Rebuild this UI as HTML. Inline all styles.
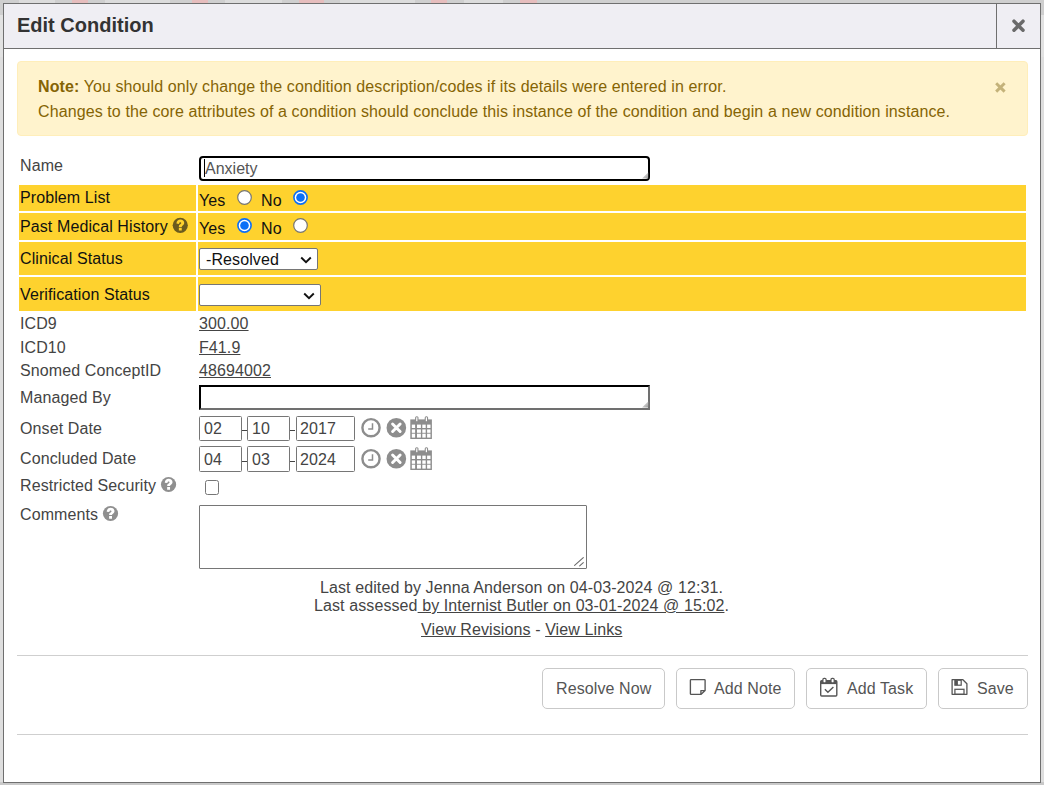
<!DOCTYPE html>
<html><head><meta charset="utf-8">
<style>
html,body{margin:0;padding:0;width:1044px;height:785px;overflow:hidden;background:#dedede;font-family:"Liberation Sans",sans-serif;}
.a{position:absolute;}
.t{position:absolute;font-size:16px;line-height:18px;white-space:nowrap;color:#444;letter-spacing:0.1px;}
#bgtop{left:0;top:0;width:1044px;height:15px;background:#cfcfcf;}
#bgtop2{left:0;top:15px;width:1044px;height:42px;background:#e2e2e2;}
#bgbot{left:0;top:782px;width:1044px;height:3px;background:#c9c9c9;}
#dlg{left:3px;top:3px;width:1036px;height:778px;border:1px solid #6f6f6f;background:#fff;}
#hdr{left:0;top:0;width:1036px;height:44px;background:#efeef3;border-bottom:1px solid #6f6f6f;}
#title{left:14px;top:12px;font-size:20px;font-weight:bold;color:#333;line-height:22px;letter-spacing:0;}
#closesep{left:992px;top:0;width:1px;height:44px;background:#6f6f6f;}
#alert{left:17px;top:61px;width:1009px;height:73px;background:#fff3cd;border:1px solid #ffeeba;border-radius:4px;}
.yrow{position:absolute;background:#fed22e;}
.lnk{text-decoration:underline;}
.btn{position:absolute;top:668px;height:39px;border:1px solid #c9c9c9;border-radius:5px;background:#fff;}
.bt{position:absolute;font-size:16px;line-height:18px;color:#555;white-space:nowrap;letter-spacing:0.1px;}
.hr{position:absolute;left:17px;width:1011px;height:1px;background:#cfcfcf;}
</style></head><body>
<div class="a" id="bgtop"></div>
<div class="a" id="bgtop2"></div>
<div class="a" id="bgbot"></div>
<div class="a" style="left:19px;top:0;width:36px;height:3px;background:#e4e4e4;opacity:0.6"></div>
<div class="a" style="left:105px;top:0;width:65px;height:3px;background:#e4e4e4;opacity:0.6"></div>
<div class="a" style="left:225px;top:0;width:57px;height:3px;background:#e4e4e4;opacity:0.6"></div>
<div class="a" style="left:340px;top:0;width:75px;height:3px;background:#e4e4e4;opacity:0.6"></div>
<div class="a" style="left:464px;top:0;width:39px;height:3px;background:#e4e4e4;opacity:0.6"></div>
<div class="a" style="left:72px;top:0;width:16px;height:3px;background:#e6bdbd"></div>
<div class="a" style="left:192px;top:0;width:16px;height:3px;background:#e6bdbd"></div>
<div class="a" style="left:299px;top:0;width:25px;height:3px;background:#e6bdbd"></div>
<div class="a" style="left:431px;top:0;width:16px;height:3px;background:#e6bdbd"></div>
<div class="a" style="left:520px;top:0;width:17px;height:3px;background:#e6bdbd"></div>
<div class="a" id="dlg">
  <div class="a" id="hdr"></div>
  <div class="a" id="closesep"></div>
</div>
<div class="t" id="title" style="left:17px;top:14px;">Edit Condition</div>
<svg class="a" style="left:1011px;top:19px" width="15" height="14" viewBox="0 0 15 14"><path d="M3 2.2 L12 11.2 M12 2.2 L3 11.2" stroke="#6a6a6a" stroke-width="3.5" stroke-linecap="round"/></svg>

<div class="a" id="alert"></div>
<div class="t" style="left:38px;top:78px;color:#856404;"><b>Note:</b> You should only change the condition description/codes if its details were entered in error.</div>
<div class="t" style="left:38px;top:103px;color:#856404;">Changes to the core attributes of a condition should conclude this instance of the condition and begin a new condition instance.</div>
<svg class="a" style="left:995px;top:82px" width="11" height="11" viewBox="0 0 11 11"><path d="M2.2 2.2 L8.6 8.6 M8.6 2.2 L2.2 8.6" stroke="#c4b27a" stroke-width="2.9" stroke-linecap="square"/></svg>

<!-- yellow rows -->
<div class="yrow" style="left:19px;top:185px;width:177px;height:26px"></div>
<div class="yrow" style="left:198px;top:185px;width:828px;height:26px"></div>
<div class="yrow" style="left:19px;top:213px;width:177px;height:27px"></div>
<div class="yrow" style="left:198px;top:213px;width:828px;height:27px"></div>
<div class="yrow" style="left:19px;top:242px;width:177px;height:33px"></div>
<div class="yrow" style="left:198px;top:242px;width:828px;height:33px"></div>
<div class="yrow" style="left:19px;top:277px;width:177px;height:34px"></div>
<div class="yrow" style="left:198px;top:277px;width:828px;height:34px"></div>

<!-- labels -->
<div class="t" style="left:20px;top:157px;">Name</div>
<div class="t" style="left:20px;top:189px;color:#111;">Problem List</div>
<div class="t" style="left:20px;top:218px;color:#111;">Past Medical History</div>
<div class="t" style="left:20px;top:250px;color:#111;">Clinical Status</div>
<div class="t" style="left:20px;top:286px;color:#111;">Verification Status</div>
<div class="t" style="left:20px;top:315px;">ICD9</div>
<div class="t" style="left:20px;top:339px;">ICD10</div>
<div class="t" style="left:20px;top:362px;">Snomed ConceptID</div>
<div class="t" style="left:20px;top:389px;">Managed By</div>
<div class="t" style="left:20px;top:420px;">Onset Date</div>
<div class="t" style="left:20px;top:450px;">Concluded Date</div>
<div class="t" style="left:20px;top:477px;">Restricted Security</div>
<div class="t" style="left:20px;top:506px;">Comments</div>

<!-- help icons -->
<svg class="a" style="left:172px;top:217px" width="18" height="18" viewBox="0 0 18 18"><circle cx="8.25" cy="8.35" r="7.6" fill="#6b5b1e"/><path transform="translate(0.25 0.35)" d="M4.2 6.2 C4.3 3.8 6.0 2.2 8.1 2.2 C10.3 2.2 12.0 3.6 12.0 5.7 C12.0 7.9 9.5 8.3 9.5 9.3 V9.6 H6.6 V8.9 C6.6 7.0 9.0 6.9 9.0 5.9 C9.0 5.3 8.6 4.9 8.0 4.9 C7.3 4.9 6.9 5.4 6.8 6.6 Z M6.6 10.4 H9.5 V13.2 H6.6 Z" fill="#fed22e"/></svg>
<svg class="a" style="left:160px;top:476px" width="18" height="18" viewBox="0 0 18 18"><circle cx="8.55" cy="8.5" r="7.6" fill="#8f8f8f"/><path transform="translate(0.55 0.50)" d="M4.2 6.2 C4.3 3.8 6.0 2.2 8.1 2.2 C10.3 2.2 12.0 3.6 12.0 5.7 C12.0 7.9 9.5 8.3 9.5 9.3 V9.6 H6.6 V8.9 C6.6 7.0 9.0 6.9 9.0 5.9 C9.0 5.3 8.6 4.9 8.0 4.9 C7.3 4.9 6.9 5.4 6.8 6.6 Z M6.6 10.4 H9.5 V13.2 H6.6 Z" fill="#fff"/></svg>
<svg class="a" style="left:102px;top:505px" width="18" height="18" viewBox="0 0 18 18"><circle cx="8.5" cy="8.5" r="7.6" fill="#8f8f8f"/><path transform="translate(0.50 0.50)" d="M4.2 6.2 C4.3 3.8 6.0 2.2 8.1 2.2 C10.3 2.2 12.0 3.6 12.0 5.7 C12.0 7.9 9.5 8.3 9.5 9.3 V9.6 H6.6 V8.9 C6.6 7.0 9.0 6.9 9.0 5.9 C9.0 5.3 8.6 4.9 8.0 4.9 C7.3 4.9 6.9 5.4 6.8 6.6 Z M6.6 10.4 H9.5 V13.2 H6.6 Z" fill="#fff"/></svg>
<!-- name input -->
<div class="a" style="left:199px;top:156px;width:447px;height:21px;border:2px solid #000;border-radius:4px;background:#fff;"></div>
<div class="a" style="left:204px;top:159px;width:1px;height:18px;background:#000;"></div>
<div class="t" style="left:205px;top:160px;color:#555;letter-spacing:0;">Anxiety</div>

<!-- radios -->
<div class="t" style="left:199px;top:192px;color:#111;">Yes</div>
<div class="t" style="left:261px;top:192px;color:#111;">No</div>
<div class="t" style="left:199px;top:220px;color:#111;">Yes</div>
<div class="t" style="left:261px;top:220px;color:#111;">No</div>
<svg class="a" style="left:237px;top:190px" width="15" height="15" viewBox="0 0 15 15"><circle cx="7.5" cy="7.5" r="6.8" fill="#fff" stroke="#767676" stroke-width="1.2"/></svg>
<svg class="a" style="left:293px;top:190px" width="15" height="15" viewBox="0 0 15 15"><circle cx="7.5" cy="7.5" r="6.6" fill="#fff" stroke="#0b6ff7" stroke-width="1.6"/><circle cx="7.5" cy="7.5" r="4.3" fill="#0b6ff7"/></svg>
<svg class="a" style="left:237px;top:218px" width="15" height="15" viewBox="0 0 15 15"><circle cx="7.5" cy="7.5" r="6.6" fill="#fff" stroke="#0b6ff7" stroke-width="1.6"/><circle cx="7.5" cy="7.5" r="4.3" fill="#0b6ff7"/></svg>
<svg class="a" style="left:293px;top:218px" width="15" height="15" viewBox="0 0 15 15"><circle cx="7.5" cy="7.5" r="6.8" fill="#fff" stroke="#767676" stroke-width="1.2"/></svg>

<!-- selects -->
<div class="a" style="left:199px;top:248px;width:117px;height:20px;border:1px solid #767676;border-radius:2px;background:#fff;"></div>
<div class="t" style="left:206px;top:251px;color:#111;">-Resolved</div>
<svg class="a" style="left:300px;top:256px" width="12" height="8" viewBox="0 0 12 8"><path d="M1.2 1.5 L6 6.2 L10.8 1.5" fill="none" stroke="#111" stroke-width="1.9"/></svg>
<div class="a" style="left:199px;top:284px;width:120px;height:20px;border:1px solid #767676;border-radius:2px;background:#fff;"></div>
<svg class="a" style="left:303px;top:292px" width="12" height="8" viewBox="0 0 12 8"><path d="M1.2 1.5 L6 6.2 L10.8 1.5" fill="none" stroke="#111" stroke-width="1.9"/></svg>

<!-- codes -->
<div class="t lnk" style="left:199px;top:315px;">300.00</div>
<div class="t lnk" style="left:199px;top:339px;">F41.9</div>
<div class="t lnk" style="left:199px;top:362px;">48694002</div>

<!-- managed by -->
<div class="a" style="left:199px;top:385px;width:447px;height:21px;border:2px solid;border-color:#000 #707070 #707070 #000;background:#fff;"></div>

<!-- dates -->
<div class="a" style="left:199px;top:416px;width:41px;height:23px;border:1px solid #767676;border-radius:1.5px;"></div>
<div class="a" style="left:242px;top:430px;width:5px;height:1px;background:#444;"></div>
<div class="a" style="left:247px;top:416px;width:41px;height:23px;border:1px solid #767676;border-radius:1.5px;"></div>
<div class="a" style="left:290px;top:430px;width:5px;height:1px;background:#444;"></div>
<div class="a" style="left:296px;top:416px;width:57px;height:23px;border:1px solid #767676;border-radius:1.5px;"></div>
<div class="t" style="left:204px;top:420px;">02</div>
<div class="t" style="left:252px;top:420px;">10</div>
<div class="t" style="left:300px;top:420px;">2017</div>

<div class="a" style="left:199px;top:446px;width:41px;height:24px;border:1px solid #767676;border-radius:1.5px;"></div>
<div class="a" style="left:242px;top:461px;width:5px;height:1px;background:#444;"></div>
<div class="a" style="left:247px;top:446px;width:41px;height:24px;border:1px solid #767676;border-radius:1.5px;"></div>
<div class="a" style="left:290px;top:461px;width:5px;height:1px;background:#444;"></div>
<div class="a" style="left:296px;top:446px;width:57px;height:24px;border:1px solid #767676;border-radius:1.5px;"></div>
<div class="t" style="left:204px;top:451px;">04</div>
<div class="t" style="left:252px;top:451px;">03</div>
<div class="t" style="left:300px;top:451px;">2024</div>

<!-- date icons -->
<svg class="a" style="left:361px;top:416px" width="72" height="24" viewBox="0 0 72 24">
  <circle cx="10" cy="11.7" r="8.6" fill="none" stroke="#8d8d8d" stroke-width="2.4"/>
  <path d="M11.5 7.2 V13 H7.2" fill="none" stroke="#8d8d8d" stroke-width="1.5"/>
  <circle cx="35.35" cy="11.75" r="9.8" fill="#8d8d8d"/>
  <path d="M31.6 8 L39.1 15.5 M39.1 8 L31.6 15.5" stroke="#fff" stroke-width="3" stroke-linecap="round"/>
  <rect x="49.3" y="3.4" width="21.6" height="19.6" fill="#8d8d8d"/>
  <g fill="#fff"><rect x="50.8" y="8.6" width="3.3" height="3.4"/><rect x="56" y="8.6" width="3.9" height="3.4"/><rect x="61.3" y="8.6" width="3.4" height="3.4"/><rect x="66.1" y="8.6" width="3.4" height="3.4"/>
  <rect x="50.8" y="13.4" width="3.3" height="3.4"/><rect x="56" y="13.4" width="3.9" height="3.4"/><rect x="61.3" y="13.4" width="3.4" height="3.4"/><rect x="66.1" y="13.4" width="3.4" height="3.4"/>
  <rect x="50.8" y="17.7" width="3.3" height="3.9"/><rect x="56" y="17.7" width="3.9" height="3.9"/><rect x="61.3" y="17.7" width="3.4" height="3.9"/><rect x="66.1" y="17.7" width="3.4" height="3.9"/></g>
  <rect x="54.1" y="0.3" width="3.4" height="5.9" rx="1.5" fill="#8d8d8d"/><rect x="63.7" y="0.3" width="3.4" height="5.9" rx="1.5" fill="#8d8d8d"/>
  <rect x="55.2" y="1.3" width="1.2" height="3.9" fill="#fff"/><rect x="64.8" y="1.3" width="1.2" height="3.9" fill="#fff"/>
</svg>
<svg class="a" style="left:361px;top:447px" width="72" height="24" viewBox="0 0 72 24">
  <circle cx="10" cy="11.7" r="8.6" fill="none" stroke="#8d8d8d" stroke-width="2.4"/>
  <path d="M11.5 7.2 V13 H7.2" fill="none" stroke="#8d8d8d" stroke-width="1.5"/>
  <circle cx="35.35" cy="11.75" r="9.8" fill="#8d8d8d"/>
  <path d="M31.6 8 L39.1 15.5 M39.1 8 L31.6 15.5" stroke="#fff" stroke-width="3" stroke-linecap="round"/>
  <rect x="49.3" y="3.4" width="21.6" height="19.6" fill="#8d8d8d"/>
  <g fill="#fff"><rect x="50.8" y="8.6" width="3.3" height="3.4"/><rect x="56" y="8.6" width="3.9" height="3.4"/><rect x="61.3" y="8.6" width="3.4" height="3.4"/><rect x="66.1" y="8.6" width="3.4" height="3.4"/>
  <rect x="50.8" y="13.4" width="3.3" height="3.4"/><rect x="56" y="13.4" width="3.9" height="3.4"/><rect x="61.3" y="13.4" width="3.4" height="3.4"/><rect x="66.1" y="13.4" width="3.4" height="3.4"/>
  <rect x="50.8" y="17.7" width="3.3" height="3.9"/><rect x="56" y="17.7" width="3.9" height="3.9"/><rect x="61.3" y="17.7" width="3.4" height="3.9"/><rect x="66.1" y="17.7" width="3.4" height="3.9"/></g>
  <rect x="54.1" y="0.3" width="3.4" height="5.9" rx="1.5" fill="#8d8d8d"/><rect x="63.7" y="0.3" width="3.4" height="5.9" rx="1.5" fill="#8d8d8d"/>
  <rect x="55.2" y="1.3" width="1.2" height="3.9" fill="#fff"/><rect x="64.8" y="1.3" width="1.2" height="3.9" fill="#fff"/>
</svg>

<!-- checkbox -->
<div class="a" style="left:205px;top:480px;width:12px;height:13px;border:1.3px solid #767676;border-radius:2.5px;"></div>

<!-- comments -->
<div class="a" style="left:199px;top:505px;width:386px;height:62px;border:1px solid #767676;border-radius:1px;"></div>


<!-- resize grips -->
<svg class="a" style="left:641px;top:171px" width="8" height="8" viewBox="0 0 8 8"><defs><linearGradient id="gg" x1="0" y1="0" x2="1" y2="1"><stop offset="0.3" stop-color="#dcdcdc"/><stop offset="1" stop-color="#9a9a9a"/></linearGradient></defs><path d="M1 7.6 L7.2 1.4 V7.6 Z" fill="url(#gg)"/></svg>
<svg class="a" style="left:641px;top:400px" width="8" height="8" viewBox="0 0 8 8"><path d="M1 7.6 L7.2 1.4 V7.6 Z" fill="url(#gg)"/></svg>
<svg class="a" style="left:572px;top:555px" width="14" height="13" viewBox="0 0 14 13"><path d="M2.6 10.3 L11.3 2.6 M7.7 10.8 L11.3 7.7" stroke="#6a6a6a" stroke-width="1.1" stroke-linecap="round"/></svg>

<!-- footer text -->
<div class="t" style="left:320px;top:579px;">Last edited by Jenna Anderson on 04-03-2024 @ 12:31.</div>
<div class="t" style="left:314px;top:597px;">Last assessed<span class="lnk"> by Internist Butler on 03-01-2024 @ 15:02</span>.</div>
<div class="t" style="left:421px;top:621px;"><span class="lnk">View Revisions</span> - <span class="lnk">View Links</span></div>

<div class="hr" style="top:655px"></div>
<div class="hr" style="top:734px"></div>

<!-- buttons -->
<div class="btn" style="left:542px;width:121px;"></div>
<div class="bt" style="left:556px;top:680px;">Resolve Now</div>
<div class="btn" style="left:676px;width:117px;"></div>
<div class="bt" style="left:714px;top:680px;">Add Note</div>
<div class="btn" style="left:806px;width:119px;"></div>
<div class="bt" style="left:847px;top:680px;">Add Task</div>
<div class="btn" style="left:938px;width:88px;"></div>
<div class="bt" style="left:977px;top:680px;">Save</div>

<!-- button icons -->
<svg class="a" style="left:685px;top:674px" width="26" height="26" viewBox="0 0 26 26"><path d="M5.4 6.3 Q5.4 5.6 6.1 5.6 H19.4 Q20.1 5.6 20.1 6.3 V16.6 L15.9 20.4 H6.1 Q5.4 20.4 5.4 19.7 Z M15.9 20.4 V16.6 H20.1" fill="none" stroke="#555" stroke-width="1.35" stroke-linejoin="round"/></svg>
<svg class="a" style="left:815px;top:674px" width="26" height="26" viewBox="0 0 26 26"><rect x="5.7" y="6.8" width="16.1" height="15.2" rx="1" fill="none" stroke="#555" stroke-width="1.4"/><rect x="5.7" y="6.8" width="16.1" height="3.3" fill="#555"/><rect x="7.9" y="4.3" width="3.2" height="4.6" rx="1.2" fill="#fff" stroke="#555" stroke-width="1.2"/><rect x="16" y="4.3" width="3.2" height="4.6" rx="1.2" fill="#fff" stroke="#555" stroke-width="1.2"/><path d="M9.9 15.3 L12.9 18.3 L18.4 13" fill="none" stroke="#555" stroke-width="1.4"/></svg>
<svg class="a" style="left:946px;top:674px" width="26" height="26" viewBox="0 0 26 26"><path d="M6.1 5.7 H16.9 L20.9 9.7 V20.3 H6.1 Z" fill="none" stroke="#555" stroke-width="1.3" stroke-linejoin="round"/><rect x="8.9" y="6.2" width="6.3" height="5" fill="none" stroke="#555" stroke-width="1.2"/><rect x="8.9" y="6.2" width="3.0" height="5" fill="#555"/><rect x="8.9" y="15.3" width="9.1" height="5" fill="none" stroke="#555" stroke-width="1.25"/></svg>
</body></html>
